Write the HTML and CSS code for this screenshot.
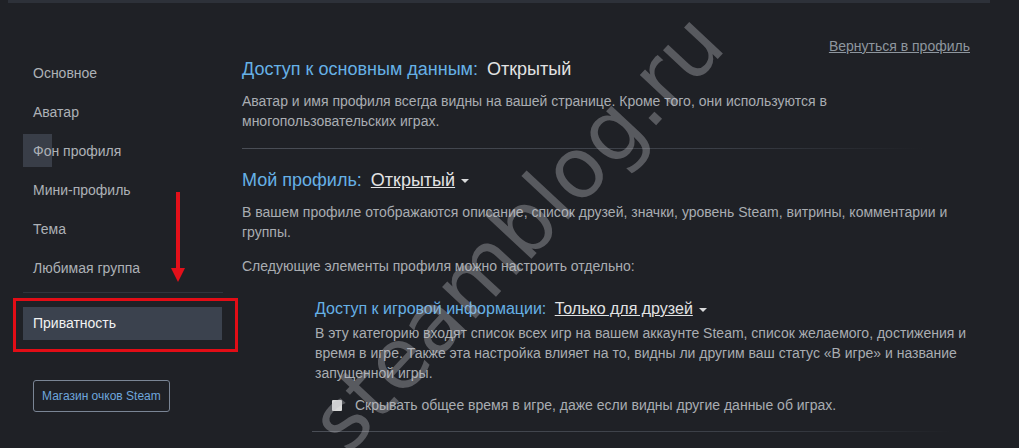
FILE: index.html
```html
<!DOCTYPE html>
<html lang="ru">
<head>
  <meta charset="UTF-8">
  <title>Настройки приватности</title>
  <link rel="stylesheet" href="styles.css">
</head>
<body>

  <div class="top-strip"></div>

  <div class="page">

    <!-- Sidebar -->
    <div class="sidebar">
      <a class="nav-item">Основное</a>
      <a class="nav-item">Аватар</a>
      <a class="nav-item hover-mark">Фон профиля</a>
      <a class="nav-item">Мини-профиль</a>
      <a class="nav-item">Тема</a>
      <a class="nav-item">Любимая группа</a>
      <div class="nav-sep"></div>
      <a class="nav-item active">Приватность</a>
      <a class="points-btn">Магазин очков Steam</a>
    </div>

    <!-- Main settings -->
    <div class="main">
      <div class="back-row"><a class="back-link">Вернуться в профиль</a></div>

      <div class="section-title">
        <span class="label">Доступ к основным данным:</span>
        <span class="value">Открытый</span>
      </div>
      <p class="desc first">Аватар и имя профиля всегда видны на вашей странице. Кроме того, они используются в многопользовательских играх.</p>

      <div class="sep"></div>

      <div class="section-title spaced">
        <span class="label">Мой профиль:</span>
        <span class="value drop">Открытый</span><span class="caret"></span>
      </div>
      <p class="desc first">В вашем профиле отображаются описание, список друзей, значки, уровень Steam, витрины, комментарии и группы.</p>
      <p class="desc second">Следующие элементы профиля можно настроить отдельно:</p>

      <div class="sub">
        <div class="sub-title">
          <span class="label">Доступ к игровой информации:</span>
          <span class="value drop">Только для друзей</span><span class="caret"></span>
        </div>
        <p class="desc tight">В эту категорию входят список всех игр на вашем аккаунте Steam, список желаемого, достижения и время в игре. Также эта настройка влияет на то, видны ли другим ваш статус «В игре» и название запущенной игры.</p>
        <label class="check-row"><span class="checkbox"></span>Скрывать общее время в игре, даже если видны другие данные об играх.</label>
        <div class="sep sub-sep"></div>
      </div>
    </div>
  </div>

  <!-- Annotations on top of the screenshot -->
  <div class="red-box"></div>
  <svg class="red-arrow" width="16" height="92" viewBox="0 0 16 92">
    <rect x="6" y="0" width="4" height="80" fill="#e3101a"/>
    <polygon points="1,76 15,76 8,90" fill="#e3101a"/>
  </svg>
  <div class="watermark">steamblog.ru</div>

</body>
</html>
```

FILE: styles.css
```css
/* General */
body {
  margin: 0;
  height: 448px;
  background-color: #1f2126;
  font-family: "Liberation Sans", Arial, sans-serif;
  color: #acb0b5;
  overflow: hidden;
}

a {
  cursor: pointer;
}

.top-strip {
  height: 3px;
  margin: 0 29px 0 8px;
  background-color: #2d3139;
}

.page {
  display: flex;
}

/* Sidebar */
.sidebar {
  width: 219px;
  flex-shrink: 0;
  padding: 51px 0 0 23px;
}

.nav-item {
  display: block;
  position: relative;
  height: 39px;
  line-height: 39px;
  padding-left: 10px;
  font-size: 14px;
  color: #adb1b6;
}

.hover-mark {
  z-index: 0;
}

.hover-mark::before {
  content: "";
  position: absolute;
  left: 0;
  top: 2px;
  width: 29px;
  height: 33px;
  background-color: #393e48;
  z-index: -1;
}

.nav-sep {
  width: 200px;
  height: 1px;
  margin: 4px 0 14px;
  background-color: #30343c;
}

.nav-item.active {
  width: 189px;
  height: 33px;
  line-height: 33px;
  background-color: #3b424e;
  color: #f2f2f2;
}

.points-btn {
  display: inline-block;
  margin: 40px 0 0 10px;
  height: 30px;
  line-height: 30px;
  padding: 0 8px;
  border: 1px solid #7a8595;
  border-radius: 3px;
  font-size: 12px;
  color: #6ea6dc;
}

/* Main */
.main {
  width: 736px;
  padding-top: 34px;
}

.back-row {
  text-align: right;
  padding-right: 8px;
  line-height: 18px;
}

.back-link {
  font-size: 14px;
  color: #8e969e;
  text-decoration: underline;
}

.section-title {
  margin-top: 3px;
  font-size: 18px;
  line-height: 22px;
}

.section-title.spaced {
  margin-top: 20px;
}

.label {
  color: #66b1e6;
}

.value {
  color: #e2e3e4;
  margin-left: 4px;
}

.value.drop {
  text-decoration: underline;
}

.caret {
  display: inline-block;
  width: 0;
  height: 0;
  margin-left: 6px;
  border-left: 4px solid transparent;
  border-right: 4px solid transparent;
  border-top: 4px solid #d8d9da;
  vertical-align: middle;
}

.desc {
  margin: 0;
  font-size: 14px;
  line-height: 20px;
  color: #a9adb2;
}

.desc.first {
  margin-top: 11px;
}

.desc.second {
  margin-top: 14px;
}

.sep {
  height: 1px;
  margin-top: 17px;
  width: 680px;
  background: linear-gradient(to right, #4a4e56, #3a3e46 70%, rgba(58, 62, 70, 0));
}

/* Game details sub section */
.sub {
  margin: 23px 0 0 73px;
}

.sub-title {
  font-size: 16px;
  line-height: 20px;
}

.desc.tight {
  margin-top: 4px;
}

.check-row {
  display: flex;
  align-items: center;
  margin: 12px 0 0 17px;
  font-size: 14px;
  line-height: 20px;
  color: #a9adb2;
}

.checkbox {
  width: 10px;
  height: 11px;
  margin-right: 13px;
  background-color: #d9d9d9;
  border-radius: 1px;
}

.sub-sep {
  margin: 16px 0 0 -3px;
  width: 640px;
}

/* Overlay annotations */
.red-box {
  position: absolute;
  left: 13px;
  top: 298px;
  width: 219px;
  height: 48px;
  border: 3px solid #e20d16;
}

.red-arrow {
  position: absolute;
  left: 170px;
  top: 192px;
}

.watermark {
  position: absolute;
  left: 238px;
  top: 187px;
  font-family: "DejaVu Sans", sans-serif;
  font-size: 84px;
  line-height: 90px;
  color: rgba(190, 192, 196, 0.36);
  transform: rotate(-47deg);
  transform-origin: center;
  white-space: nowrap;
  pointer-events: none;
}
```
